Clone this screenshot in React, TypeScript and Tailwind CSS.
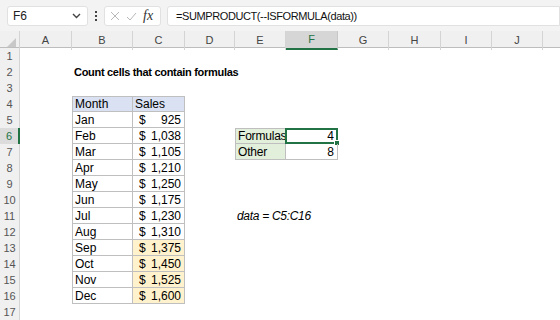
import React from "react"

const letters = ["A", "B", "C", "D", "E", "F", "G", "H", "I", "J", ""]

const sales: [string, string, boolean][] = [
    ["Jan", "925", false],
    ["Feb", "1,038", false],
    ["Mar", "1,105", false],
    ["Apr", "1,210", false],
    ["May", "1,250", false],
    ["Jun", "1,175", false],
    ["Jul", "1,230", false],
    ["Aug", "1,310", false],
    ["Sep", "1,375", true],
    ["Oct", "1,450", true],
    ["Nov", "1,525", true],
    ["Dec", "1,600", true],
]

const gridCols = "grid w-[594px] grid-cols-[20px_52px_61px_52px_50px_51px_52px_51px_52px_51px_51px_51px]"

function Blank() {
    return <div className="h-4" />
}

function Row({ n, children }: { n: number; children: React.ReactNode }) {
    const active = n === 6
    return (
        <div className={gridCols}>
            <div
                className={
                    active
                        ? "h-4 flex items-center justify-center text-[11px] text-[#217346] bg-[#dcdcdc] border-r-2 border-[#217346]"
                        : "h-4 flex items-center justify-center text-[11px] text-[#555] bg-[#f0f0f0] border-r border-[#d4d4d4]"
                }
            >
                {n}
            </div>
            {children}
        </div>
    )
}

function TableRows() {
    const out: React.ReactNode[] = []
    for (let n = 1; n <= 17; n++) {
        const cells: React.ReactNode[] = [<Blank key="a" />]
        if (n === 2) {
            cells.push(
                <div key="b" className="h-4 pl-[2px] flex items-center font-bold text-[11px] tracking-[-0.3px] whitespace-nowrap z-10">
                    Count cells that contain formulas
                </div>
            )
            cells.push(<Blank key="c" />)
        } else if (n === 4) {
            cells.push(
                <div key="b" className="h-4 pl-[2px] flex items-center bg-[#d9e1f2] border-t border-l border-r border-b border-[#bfbfbf]">
                    Month
                </div>
            )
            cells.push(
                <div key="c" className="h-4 pl-[2px] flex items-center bg-[#d9e1f2] border-t border-r border-b border-[#bfbfbf]">
                    Sales
                </div>
            )
        } else if (n >= 5 && n <= 16) {
            const [m, v, hl] = sales[n - 5]
            cells.push(
                <div key="b" className="h-4 pl-[2px] flex items-center border-l border-r border-b border-[#bfbfbf]">
                    {m}
                </div>
            )
            cells.push(
                <div
                    key="c"
                    className={
                        "h-4 pl-[6px] pr-[3px] flex items-center justify-between border-r border-b border-[#bfbfbf] " +
                        (hl ? "bg-[#fff2cc]" : "")
                    }
                >
                    <span>$</span>
                    <span>{v}</span>
                </div>
            )
        } else {
            cells.push(<Blank key="b" />, <Blank key="c" />)
        }
        cells.push(<Blank key="d" />)
        if (n === 6 || n === 7) {
            cells.push(
                <div
                    key="e"
                    className={
                        "h-4 pl-[2px] flex items-center bg-[#e2efda] border-l border-r border-b border-[#bfbfbf] tracking-[-0.2px] " +
                        (n === 6 ? "border-t" : "")
                    }
                >
                    {n === 6 ? "Formulas" : "Other"}
                </div>
            )
            cells.push(
                <div
                    key="f"
                    className={
                        "relative h-4 pr-[3px] flex items-center justify-end border-r border-b border-[#bfbfbf] " +
                        (n === 6 ? "border-t" : "")
                    }
                >
                    {n === 6 ? "4" : "8"}
                    {n === 6 && (
                        <div className="absolute -left-px -top-px -right-px -bottom-px border-2 border-[#217346]">
                            <div className="absolute -right-[4px] -bottom-[4px] w-[6px] h-[6px] bg-[#217346] border border-white" />
                        </div>
                    )}
                </div>
            )
        } else if (n === 11) {
            cells.push(
                <div key="e" className="h-4 pl-[2px] flex items-center italic tracking-[-0.3px] whitespace-nowrap">
                    data = C5:C16
                </div>
            )
            cells.push(<Blank key="f" />)
        } else {
            cells.push(<Blank key="e" />, <Blank key="f" />)
        }
        cells.push(<Blank key="g" />, <Blank key="h" />, <Blank key="i" />, <Blank key="j" />, <Blank key="k" />)
        out.push(
            <Row key={n} n={n}>
                {cells}
            </Row>
        )
    }
    return <>{out}</>
}

export default function App() {
    return (
        <div className="w-[560px] h-[320px] overflow-hidden bg-white text-[12px] text-black font-['Liberation_Sans',sans-serif]">
            {/* formula bar */}
            <div className="h-[31px] bg-[#f3f3f3] flex items-center gap-[6px] pl-[7px] pt-px">
                <div className="w-[81px] h-[20px] bg-white border border-[#e1e1e1] rounded-[3px] flex items-center justify-between pl-[5px] pr-[6px] text-[12px] text-[#222]">
                    <span>F6</span>
                    <svg width="9" height="6" viewBox="0 0 9 6" fill="none" stroke="#444" strokeWidth="1.4">
                        <path d="M1 1l3.5 3.5L8 1" />
                    </svg>
                </div>
                <div className="w-[4px] flex flex-col items-center gap-[2px]">
                    <div className="w-[2px] h-[2px] bg-[#444]" />
                    <div className="w-[2px] h-[2px] bg-[#444]" />
                    <div className="w-[2px] h-[2px] bg-[#444]" />
                </div>
                <div className="w-[57px] h-[20px] bg-white border border-[#e1e1e1] rounded-[3px] flex items-center gap-[6px] pl-[5px]">
                    <svg width="10" height="10" viewBox="0 0 10 10" stroke="#b8b8b8" strokeWidth="1">
                        <path d="M1 1l8 8M9 1l-8 8" />
                    </svg>
                    <svg width="11" height="9" viewBox="0 0 11 9" fill="none" stroke="#b8b8b8" strokeWidth="1">
                        <path d="M1 5l3 3 6-7" />
                    </svg>
                    <span className="font-['Liberation_Serif',serif] italic text-[14px] text-[#333] leading-none">
                        fx
                    </span>
                </div>
                <div className="flex-1 h-[20px] bg-white border border-[#e1e1e1] rounded-l-[3px] flex items-center pl-[8px] text-[11px] tracking-[-0.4px] text-[#111]">
                    =SUMPRODUCT(--ISFORMULA(data))
                </div>
            </div>
            {/* column headers */}
            <div className={gridCols + " h-[17px] bg-[#f0f0f0] border-b border-[#bdbdbd]"}>
                <div className="relative border-r border-[#d4d4d4]">
                    <div className="absolute right-[3px] bottom-[3px] w-0 h-0 border-l-[9px] border-l-transparent border-b-[9px] border-b-[#c8c8c8]" />
                </div>
                {letters.map((l, i) => (
                    <div
                        key={i}
                        className={
                            l === "F"
                                ? "flex items-center justify-center text-[11px] text-[#217346] bg-[#d6d6d6] border-r border-[#c8c8c8] border-b-2 border-b-[#217346]"
                                : "flex items-center justify-center text-[11px] text-[#444] border-r border-[#d4d4d4]"
                        }
                    >
                        {l}
                    </div>
                ))}
            </div>
            <TableRows />
        </div>
    )
}
